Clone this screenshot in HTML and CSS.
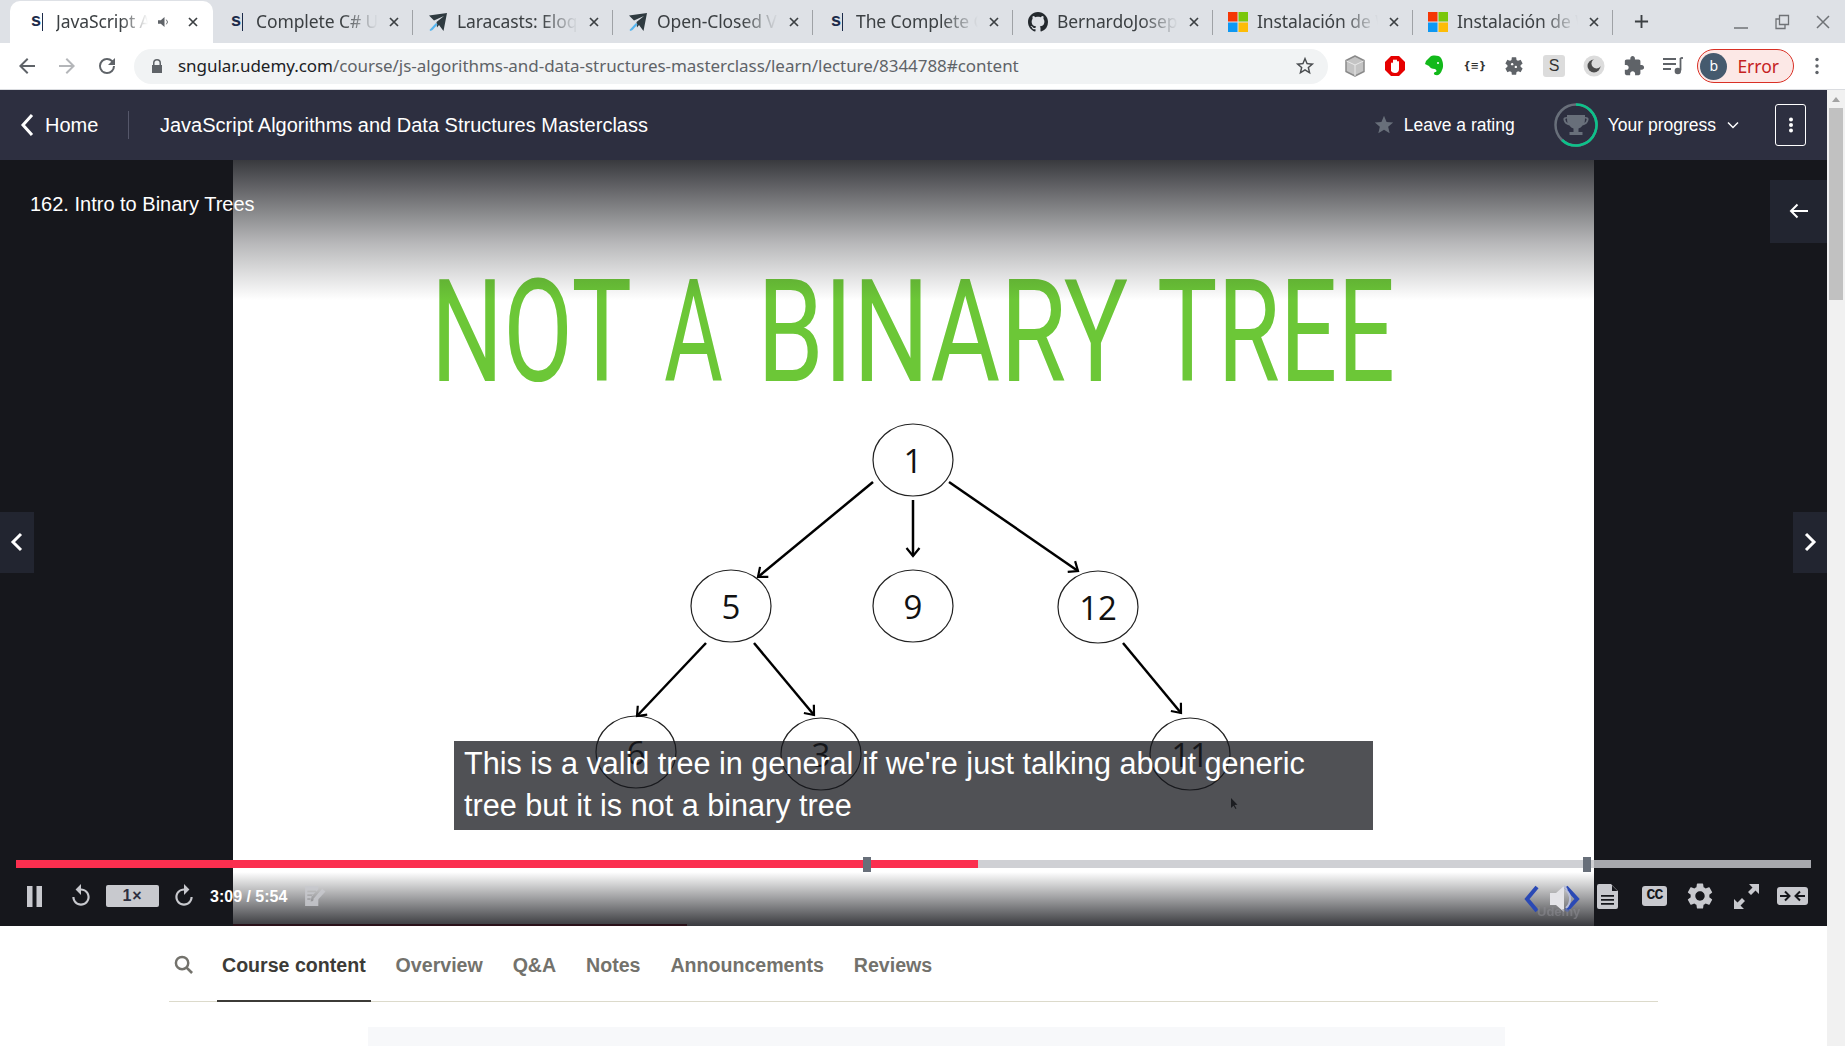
FILE: index.html
```html
<!DOCTYPE html>
<html lang="en">
<head>
<meta charset="utf-8">
<title>JavaScript Algorithms and Data Structures Masterclass</title>
<link rel="stylesheet" href="styles.css">
</head>
<body>
<svg class="defs" width="0" height="0" aria-hidden="true">
  <defs>
    <symbol id="plane" viewBox="0 0 20 20"><path fill="#2f3a40" d="M1 3.500 19 1l-3.500 18-4.500-6-2 2.500-.5-5.500L16 4 6 8.500z"/><path fill="#55b4ee" d="M1.500 18 8 11l1.500 1.500-5 5.500-2 1z"/></symbol>
    <symbol id="ms" viewBox="0 0 20 20"><rect width="9.500" height="9.500" fill="#f53605"/><rect x="10.500" width="9.500" height="9.500" fill="#7ac70c"/><rect y="10.500" width="9.500" height="9.500" fill="#0e98f2"/><rect x="10.500" y="10.500" width="9.500" height="9.500" fill="#fdbc07"/></symbol>
    <symbol id="github" viewBox="0 0 16 16"><path fill="#24292e" d="M8 0C3.580 0 0 3.580 0 8c0 3.540 2.290 6.530 5.470 7.590.4.070.55-.17.55-.38 0-.19-.01-.82-.01-1.490-2.010.37-2.530-.49-2.690-.94-.09-.23-.48-.94-.82-1.130-.28-.15-.68-.52-.01-.53.63-.01 1.080.58 1.230.82.72 1.210 1.870.87 2.330.66.070-.52.28-.87.51-1.070-1.780-.2-3.640-.89-3.640-3.950 0-.87.31-1.590.82-2.150-.08-.2-.36-1.020.08-2.120 0 0 .67-.21 2.200.82.64-.18 1.320-.27 2-.27.68 0 1.360.09 2 .27 1.530-1.040 2.200-.82 2.200-.82.44 1.100.16 1.920.08 2.120.51.56.82 1.270.82 2.150 0 3.070-1.870 3.750-3.650 3.950.29.25.54.73.54 1.480 0 1.070-.01 1.930-.01 2.200 0 .21.15.46.55.38A8.013 8.013 0 0016 8c0-4.420-3.580-8-8-8z"/></symbol>
    <symbol id="x" viewBox="0 0 12 12"><path d="M2 2l8 8M10 2l-8 8" fill="none" stroke="#3c4043" stroke-width="1.700"/></symbol>
    <symbol id="replay" viewBox="0 0 24 24"><path d="M12 5V1L7 6l5 5V7c3.310 0 6 2.690 6 6s-2.690 6-6 6-6-2.690-6-6H4c0 4.420 3.580 8 8 8s8-3.580 8-8-3.580-8-8-8z"/></symbol>
    <marker id="head" markerUnits="userSpaceOnUse" markerWidth="20" markerHeight="20" refX="10" refY="10" orient="auto">
      <path d="M2 3.500 10 10 2 16.500" fill="none" stroke="#000" stroke-width="2.200"/>
    </marker>
  </defs>
</svg>

<div class="tabstrip">
  <div class="tab tab-active">
    <span class="fav-s">s</span>
    <span class="tab-title">JavaScript Algorithms</span>
    <svg class="tab-audio" viewBox="0 0 14 12"><path fill="#5f6368" d="M0 4h3l4-3.500v11L3 8H0z"/><path fill="none" stroke="#5f6368" d="M9 3.500a3.500 3.500 0 010 5"/></svg>
    <svg class="tab-close"><use href="#x"/></svg>
  </div>
  <div class="tab"><span class="fav-s">s</span><span class="tab-title">Complete C# Unity</span><svg class="tab-close"><use href="#x"/></svg></div>
  <div class="tab"><svg class="fav"><use href="#plane"/></svg><span class="tab-title">Laracasts: Eloquent</span><svg class="tab-close"><use href="#x"/></svg></div>
  <div class="tab"><svg class="fav"><use href="#plane"/></svg><span class="tab-title">Open-Closed Violation</span><svg class="tab-close"><use href="#x"/></svg></div>
  <div class="tab"><span class="fav-s">s</span><span class="tab-title">The Complete Guide</span><svg class="tab-close"><use href="#x"/></svg></div>
  <div class="tab"><svg class="fav"><use href="#github"/></svg><span class="tab-title">BernardoJoseph</span><svg class="tab-close"><use href="#x"/></svg></div>
  <div class="tab"><svg class="fav"><use href="#ms"/></svg><span class="tab-title">Instalación de WSL</span><svg class="tab-close"><use href="#x"/></svg></div>
  <div class="tab"><svg class="fav"><use href="#ms"/></svg><span class="tab-title">Instalación de WSL</span><svg class="tab-close"><use href="#x"/></svg></div>
  <svg class="newtab" viewBox="0 0 16 16"><path d="M8 1v14M1 8h14" stroke="#3c4043" stroke-width="2"/></svg>
  <div class="winctl">
    <svg class="win-icon" viewBox="0 0 16 16"><path d="M1 14h14" stroke="#6f7276" stroke-width="1.500"/></svg>
    <svg class="win-icon" viewBox="0 0 16 16"><path d="M5.500 1.500h9v9h-9zM5.500 5H2v9.500h9V11" fill="none" stroke="#6f7276" stroke-width="1.300"/></svg>
    <svg class="win-icon" viewBox="0 0 16 16"><path d="M2 2l12 12M14 2L2 14" stroke="#6f7276" stroke-width="1.500"/></svg>
  </div>
</div>

<div class="toolbar">
  <svg class="nav-ico" viewBox="0 0 24 24"><path d="M20 11H7.800l5.600-5.600L12 4l-8 8 8 8 1.400-1.400L7.800 13H20z" fill="#5f6368"/></svg>
  <svg class="nav-ico" viewBox="0 0 24 24"><path d="M4 11h12.200l-5.600-5.600L12 4l8 8-8 8-1.400-1.400 5.600-5.600H4z" fill="#b4b6b9"/></svg>
  <svg class="nav-ico" viewBox="0 0 24 24"><path d="M17.650 6.350A7.960 7.960 0 0012 4a8 8 0 108 8h-2a6 6 0 11-1.780-4.220L13 11h7V4z" fill="#5f6368"/></svg>
  <div class="omnibox">
    <svg class="lock" viewBox="0 0 12 14"><path fill="#5f6368" d="M2 6V4a4 4 0 018 0v2h1v8H1V6zm1.500 0h5V4a2.500 2.500 0 00-5 0z"/></svg>
    <span class="url"><span class="url-host">sngular.udemy.com</span>/course/js-algorithms-and-data-structures-masterclass/learn/lecture/8344788#content</span>
    <svg class="bookmark" viewBox="0 0 24 24"><path fill="#4a4d50" d="M22 9.240l-7.190-.62L12 2 9.190 8.630 2 9.240l5.460 4.730L5.820 21 12 17.270 18.180 21l-1.630-7.030L22 9.240zM12 15.400l-3.760 2.270 1-4.280-3.320-2.880 4.380-.38L12 6.100l1.710 4.040 4.380.38-3.320 2.880 1 4.280L12 15.400z"/></svg>
  </div>
  <div class="exts">
    <svg class="ext" viewBox="0 0 22 22"><path d="M11 1l9 4.500v11L11 21l-9-4.500v-11z" fill="#c4c4c4" stroke="#8a8a8a" stroke-width="1.500" stroke-linejoin="round"/><path d="M2.500 6L11 10l8.500-4M11 10v11" fill="none" stroke="#e9e9e9"/></svg>
    <svg class="ext" viewBox="0 0 22 22"><path d="M7 1h8l6 6v8l-6 6H7l-6-6V7z" fill="#e60000"/><path d="M7 16V8.500a1 1 0 012 0V11V5.500a1 1 0 012 0V11V5.500a1 1 0 012 0V11V7a1 1 0 012 0v7c0 2-1 4-4 4-2 0-3-1-4-2z" fill="#fff"/></svg>
    <svg class="ext" viewBox="0 0 22 22"><path d="M6 2c2-2 9-2 11 1 2 3 3 9 1 12-1 3-3 6-6 5-2 0-3-2-1-3 2 0 2-2 0-3-3 0-5-1-6-3L1 9l1-3z" fill="#12b91a"/><circle cx="14" cy="8" r="1" fill="#fff"/></svg>
    <span class="ext ext-json">{≡}</span>
    <svg class="ext" viewBox="0 0 24 24"><path fill="#5f6368" d="M19.140 12.940c.04-.3.06-.61.06-.94 0-.32-.02-.64-.07-.94l2.030-1.580a.49.49 0 00.12-.61l-1.920-3.320a.488.488 0 00-.59-.22l-2.390.96c-.5-.38-1.030-.7-1.620-.94l-.36-2.540a.484.484 0 00-.48-.41h-3.840c-.24 0-.43.17-.47.41l-.36 2.540c-.59.24-1.130.57-1.620.94l-2.390-.96c-.22-.08-.47 0-.59.22L2.740 8.870c-.12.21-.08.47.12.61l2.030 1.580c-.05.3-.09.63-.09.94s.02.64.07.94l-2.030 1.580a.49.49 0 00-.12.61l1.920 3.320c.12.22.37.29.59.22l2.390-.96c.5.38 1.030.7 1.620.94l.36 2.540c.05.24.24.41.48.41h3.840c.24 0 .44-.17.47-.41l.36-2.540c.59-.24 1.130-.56 1.620-.94l2.390.96c.22.08.47 0 .59-.22l1.920-3.320c.12-.22.07-.47-.12-.61l-2.010-1.580z"/><circle cx="10" cy="10" r="1.300" fill="#fff"/><circle cx="14" cy="13" r="1.300" fill="#fff"/></svg>
    <span class="ext ext-s">S</span>
    <svg class="ext" viewBox="0 0 22 22"><circle cx="11" cy="11" r="10.500" fill="#dcdcdc"/><circle cx="11" cy="11" r="6.500" fill="#4b4b4b"/><circle cx="13.500" cy="8.500" r="5" fill="#dcdcdc"/></svg>
    <svg class="ext" viewBox="0 0 24 24"><path fill="#5f6368" d="M20.500 11H19V7c0-1.100-.9-2-2-2h-4V3.500C13 2.120 11.880 1 10.500 1S8 2.120 8 3.500V5H4c-1.100 0-1.990.9-1.990 2v3.800H3.500c1.490 0 2.700 1.210 2.700 2.700s-1.210 2.700-2.700 2.700H2V20c0 1.100.9 2 2 2h3.800v-1.500c0-1.490 1.210-2.700 2.700-2.700 1.490 0 2.700 1.210 2.700 2.700V22H17c1.100 0 2-.9 2-2v-4h1.500c1.380 0 2.500-1.120 2.500-2.500S21.880 11 20.500 11z"/></svg>
    <svg class="ext" viewBox="0 0 22 22"><path d="M1 4h13M1 9h13M1 14h8" stroke="#5f6368" stroke-width="1.800"/><path d="M18.500 3v12.500" stroke="#5f6368" stroke-width="1.800"/><path d="M18.500 3H21" stroke="#5f6368" stroke-width="1.800"/><circle cx="15.800" cy="16" r="3.200" fill="#5f6368"/></svg>
  </div>
  <div class="profile"><span class="avatar">b</span><span class="profile-label">Error</span></div>
  <svg class="kebab" viewBox="0 0 4 18"><circle cx="2" cy="2.500" r="1.700" fill="#5f6368"/><circle cx="2" cy="9" r="1.700" fill="#5f6368"/><circle cx="2" cy="15.500" r="1.700" fill="#5f6368"/></svg>
</div>

<div class="viewport">
  <main class="page">
    <header class="course-header">
      <a class="home"><svg class="home-chevron" viewBox="0 0 14 24"><path d="M12 2 3 12l9 10" fill="none" stroke="#fff" stroke-width="3"/></svg>Home</a>
      <span class="course-title">JavaScript Algorithms and Data Structures Masterclass</span>
      <div class="header-actions">
        <a class="rating"><svg class="rating-star" viewBox="0 0 24 24"><path fill="#686f7a" d="M12 17.270L18.180 21l-1.640-7.030L22 9.240l-7.190-.61L12 2 9.190 8.630 2 9.240l5.460 4.730L5.820 21z"/></svg>Leave a rating</a>
        <a class="progress">
          <svg class="ring" viewBox="0 0 44 44">
            <circle cx="22" cy="22" r="20.500" fill="none" stroke="#686f7a" stroke-width="2.500"/>
            <path d="M22 1.500A20.500 20.500 0 1 1 8 37" fill="none" stroke="#0cc28a" stroke-width="2.500"/>
            <path fill="#686f7a" d="M13 12h18v2c3 0 4 1 3.500 3-.5 3-3 5-6 5.500-1 1.500-2.500 2.500-4 3V29h4v3H15.500v-3h4v-3.500c-1.500-.5-3-1.500-4-3-3-.5-5.500-2.500-6-5.500-.5-2 .5-3 3.500-3zm0 3.500c-1.500 0-2 .5-1.500 1.500.3 1.300 1 2.300 2 3-.3-1.500-.5-3-.5-4.500zm18 0c0 1.500-.2 3-.5 4.500 1-.7 1.700-1.700 2-3 .5-1 0-1.500-1.500-1.500z"/>
          </svg>
          Your progress
          <svg class="progress-chevron" viewBox="0 0 12 8"><path d="M1 1.500l5 5 5-5" fill="none" stroke="#fff" stroke-width="1.500"/></svg>
        </a>
        <button class="more-btn" type="button"><svg viewBox="0 0 6 16" class="more-ico"><circle cx="3" cy="2.500" r="2" fill="#fff"/><circle cx="3" cy="8" r="2" fill="#fff"/><circle cx="3" cy="13.500" r="2" fill="#fff"/></svg></button>
      </div>
    </header>

    <section class="video">
      <div class="slide">
        <svg class="slide-art" viewBox="233 160 1361 766">
          <text class="slide-heading" y="381"><tspan x="431" textLength="199" lengthAdjust="spacingAndGlyphs">NOT</tspan> <tspan x="664" textLength="59" lengthAdjust="spacingAndGlyphs">A</tspan> <tspan x="757" textLength="371" lengthAdjust="spacingAndGlyphs">BINARY</tspan> <tspan x="1157" textLength="238" lengthAdjust="spacingAndGlyphs">TREE</tspan></text>
          <g class="nodes">
            <ellipse cx="913" cy="460" rx="40" ry="36"/>
            <ellipse cx="731" cy="606" rx="40" ry="36"/>
            <ellipse cx="913" cy="606" rx="40" ry="36"/>
            <ellipse cx="1098" cy="607" rx="40" ry="36"/>
            <ellipse cx="636" cy="752" rx="40" ry="36"/>
            <ellipse cx="821" cy="754" rx="40" ry="36"/>
            <ellipse cx="1190" cy="754" rx="40" ry="36"/>
          </g>
          <g class="edges">
            <line x1="873" y1="482" x2="758" y2="577" marker-end="url(#head)"/>
            <line x1="913" y1="500" x2="913" y2="556" marker-end="url(#head)"/>
            <line x1="949" y1="482" x2="1078" y2="571" marker-end="url(#head)"/>
            <line x1="706" y1="643" x2="637" y2="716" marker-end="url(#head)"/>
            <line x1="754" y1="643" x2="814" y2="715" marker-end="url(#head)"/>
            <line x1="1123" y1="643" x2="1181" y2="713" marker-end="url(#head)"/>
          </g>
          <g class="labels">
            <text x="913" y="473">1</text>
            <text x="731" y="619">5</text>
            <text x="913" y="619">9</text>
            <text x="1098" y="620">12</text>
            <text x="636" y="765">6</text>
            <text x="821" y="767">3</text>
            <text x="1190" y="767">11</text>
          </g>
          <path class="cursor" d="M1231 798v10l2.500-2.300 2 3.300 1-.6-2-3.300 3-.4z"/>
        </svg>
      </div>

      <div class="shade-top"></div>
      <div class="shade-bottom"></div>
      <div class="buffer-line"></div>

      <svg class="player-mark" viewBox="1520 880 70 46">
        <path class="slide-chev" d="M1537 887 1527 899 1537 911"/>
        <path class="slide-chev" d="M1566 887 1577 899 1566 911"/>
        <path class="slide-speaker" d="M1550 893h6l8-7v26l-8-7h-6z"/>
        <path class="slide-waves" d="M1566 890a12 12 0 010 18M1564 886a17 17 0 013 4"/>
        <text class="slide-mark" x="1537" y="916">Udemy</text>
      </svg>

      <div class="lecture-title">162. Intro to Binary Trees</div>
      <button class="drawer-btn" type="button"><svg viewBox="0 0 20 16" class="drawer-ico"><path d="M19 8H2M8.500 1.500 2 8l6.500 6.500" fill="none" stroke="#fff" stroke-width="2"/></svg></button>
      <button class="step-btn step-prev" type="button"><svg viewBox="0 0 14 20" class="step-ico"><path d="M11 2 3 10l8 8" fill="none" stroke="#fff" stroke-width="3"/></svg></button>
      <button class="step-btn step-next" type="button"><svg viewBox="0 0 14 20" class="step-ico"><path d="M3 2l8 8-8 8" fill="none" stroke="#fff" stroke-width="3"/></svg></button>

      <div class="caption">This is a valid tree in general if we're just talking about generic tree but it is not a binary tree</div>

      <div class="scrub">
        <div class="scrub-played"></div>
        <span class="scrub-handle scrub-handle-a"></span>
        <span class="scrub-handle scrub-handle-b"></span>
      </div>

      <div class="controls">
        <div class="controls-group">
          <svg class="ctl-pause" viewBox="0 0 15 21"><rect width="5.500" height="21"/><rect x="9.500" width="5.500" height="21"/></svg>
          <svg class="ctl-replay"><use href="#replay"/></svg>
          <span class="ctl-speed">1×</span>
          <svg class="ctl-replay ctl-forward"><use href="#replay"/></svg>
          <span class="ctl-time">3:09 / 5:54</span>
          <svg class="ctl-note" viewBox="0 0 20 20"><path d="M1 1h12v3L7 10l-1 5 5-1 2-2v7H1zM3 5v1.500h8V5zm0 3.500V10h5V8.500zm0 3.500v1.500h3V12z"/><path d="M16.500 3.500l3 2.500-8 8.500-3.500 1 1-3.500z"/></svg>
        </div>
        <div class="controls-group">
          <svg class="ctl-doc" viewBox="0 0 21 25"><path d="M2 0h12l7 7v16a2 2 0 01-2 2H2a2 2 0 01-2-2V2a2 2 0 012-2zm13 1.500V7h5.500zM4 11v1.800h13V11zm0 4v1.800h13V15zm0 4v1.800h13V19z" fill-rule="evenodd"/></svg>
          <span class="ctl-cc">CC</span>
          <svg class="ctl-gear" viewBox="2 2 20 20"><path d="M19.140 12.940c.04-.3.06-.61.06-.94 0-.32-.02-.64-.07-.94l2.030-1.580a.49.49 0 00.12-.61l-1.920-3.320a.488.488 0 00-.59-.22l-2.390.96c-.5-.38-1.030-.7-1.620-.94l-.36-2.540a.484.484 0 00-.48-.41h-3.840c-.24 0-.43.17-.47.41l-.36 2.540c-.59.24-1.130.57-1.620.94l-2.390-.96c-.22-.08-.47 0-.59.22L2.740 8.870c-.12.21-.08.47.12.61l2.030 1.580c-.05.3-.09.63-.09.94s.02.64.07.94l-2.030 1.580a.49.49 0 00-.12.61l1.920 3.320c.12.22.37.29.59.22l2.390-.96c.5.38 1.030.7 1.620.94l.36 2.540c.05.24.24.41.48.41h3.840c.24 0 .44-.17.47-.41l.36-2.540c.59-.24 1.130-.56 1.620-.94l2.390.96c.22.08.47 0 .59-.22l1.920-3.320c.12-.22.07-.47-.12-.61l-2.010-1.580zM12 15.600c-1.980 0-3.600-1.620-3.600-3.600s1.620-3.600 3.600-3.600 3.600 1.620 3.600 3.600-1.620 3.600-3.600 3.600z"/></svg>
          <svg class="ctl-expand" viewBox="0 0 25 25"><path d="M15 0h10v10l-3.500-3.500-4.500 4.500-3-3 4.500-4.500zM10 25H0V15l3.500 3.500L8 14l3 3-4.500 4.500z"/></svg>
          <svg class="ctl-theatre" viewBox="0 0 31 18"><rect width="31" height="18" rx="3"/><path d="M3 9h9M8 4.500 12.500 9 8 13.500M28 9h-9M23 4.500 18.500 9l4.500 4.500" fill="none" stroke="#16171c" stroke-width="2"/></svg>
        </div>
      </div>
    </section>

    <nav class="course-nav">
      <svg class="nav-search" viewBox="0 0 20 20"><circle cx="8.500" cy="8.500" r="6.500" fill="none" stroke="#73726c" stroke-width="2.600"/><path d="M13 13l6 6" stroke="#73726c" stroke-width="2.800"/></svg>
      <a class="nav-item nav-item-active">Course content</a>
      <a class="nav-item">Overview</a>
      <a class="nav-item">Q&amp;A</a>
      <a class="nav-item">Notes</a>
      <a class="nav-item">Announcements</a>
      <a class="nav-item">Reviews</a>
    </nav>
    <div class="panel"></div>
  </main>
  <aside class="scrollbar">
    <span class="scroll-up"></span>
    <span class="scroll-thumb"></span>
  </aside>
</div>
</body>
</html>
```

FILE: styles.css
```css
* { box-sizing: border-box; }
html, body { margin: 0; height: 100%; overflow: hidden; }
body { font-family: "Liberation Sans", Arial, sans-serif; background: #fff; width: 1845px; height: 1046px; }
a { color: inherit; text-decoration: none; }
button { border: 0; padding: 0; font: inherit; }
.defs { position: absolute; }

/* Browser tabs */
.tabstrip { height: 43px; background: #dee1e6; display: flex; align-items: stretch; padding-left: 13px; font-family: "Noto Sans", sans-serif; }
.tab { width: 200px; flex: none; display: flex; align-items: center; padding: 0 13px 0 18px; position: relative; margin-top: 1px; }
.tab::after { content: ""; position: absolute; right: 0; top: 9px; height: 25px; width: 1px; background: #9fa2a6; }
.tab-active { width: 203px; margin-left: -3px; padding: 0 14px 0 21px; background: #fff; border-radius: 10px 10px 0 0; }
.tab-active::after, .tab:nth-child(1)::after { display: none; }
.fav-s { width: 12px; height: 18px; flex: none; margin-right: 13px; font: 700 18px/15px "Liberation Sans", sans-serif; color: #1c2b4a; border-right: 1px solid #1c2b4a; }
.fav { width: 20px; height: 20px; flex: none; margin-right: 9px; margin-left: -3px; }
.tab-title { flex: 1; min-width: 0; margin-right: 10px; margin-top: -2px; overflow: hidden; white-space: nowrap; font-size: 17.500px; letter-spacing: -.1px; color: #3c4043; -webkit-mask-image: linear-gradient(90deg, #000 70%, transparent 100%); mask-image: linear-gradient(90deg, #000 70%, transparent 100%); }
.tab-audio { width: 13px; height: 12px; margin-right: 16px; flex: none; }
.tab-close { width: 12px; height: 12px; flex: none; }
.newtab { width: 15px; height: 15px; margin: 14px 0 0 21px; flex: none; }
.winctl { margin-left: auto; padding-right: 14px; display: flex; gap: 25px; align-items: center; }
.win-icon { width: 16px; height: 16px; }

/* Browser toolbar */
.toolbar { height: 47px; display: flex; align-items: center; border-bottom: 1px solid #dadce0; background: #fff; font-family: "Noto Sans", sans-serif; padding-left: 15px; }
.nav-ico { width: 24px; height: 24px; margin-right: 16px; flex: none; }
.omnibox { margin-left: -1px; width: 1194px; height: 35px; border-radius: 18px; background: #f1f3f4; display: flex; align-items: center; padding-left: 17px; flex: none; }
.lock { width: 12px; height: 14px; flex: none; }
.url { margin-left: 15px; margin-top: -2px; font-size: 17px; letter-spacing: -.05px; color: #5f6368; white-space: nowrap; }
.url-host { color: #202124; }
.bookmark { width: 22px; height: 22px; margin-left: auto; margin-right: 12px; flex: none; }
.exts { display: flex; align-items: center; margin-left: 16px; gap: 17.800px; }
.ext { width: 22px; height: 22px; flex: none; }
.ext-json { font: 700 10px/22px "DejaVu Sans", sans-serif; color: #333; text-align: center; white-space: nowrap; }
.ext-s { font: 400 16px/22px "Liberation Sans", sans-serif; text-align: center; color: #333; background: #dcdcdc; border-radius: 3px; }
.profile { width: 97px; height: 34px; margin-left: 13px; border: 1px solid #d93025; border-radius: 17px; background: #fce8e6; display: flex; align-items: center; padding-left: 2px; flex: none; }
.avatar { width: 27px; height: 27px; border-radius: 50%; background: #455a6e; color: #fff; font-size: 14px; line-height: 26px; text-align: center; }
.profile-label { margin-left: 10px; color: #c5221f; font-size: 17.500px; }
.kebab { width: 4px; height: 18px; margin-left: 21px; flex: none; }

/* Page */
.viewport { height: 956px; display: flex; }
.page { width: 1827px; flex: none; overflow: hidden; }
.scrollbar { width: 18px; flex: none; background: #f1f1f1; position: relative; }
.scroll-up { position: absolute; left: 5px; top: 7px; border: 4px solid transparent; border-top: 0; border-bottom: 5px solid #a3a3a3; }
.scroll-thumb { position: absolute; left: 2px; right: 2px; top: 18px; height: 192px; background: #c1c1c1; }

.course-header { height: 70px; background: #2d2f40; color: #fff; display: flex; align-items: center; padding-left: 20px; }
.home { display: flex; align-items: center; width: 109px; height: 28px; border-right: 1px solid #55576a; font-size: 20px; }
.home-chevron { width: 14px; height: 24px; margin-right: 11px; }
.course-title { margin-left: 31px; font-size: 20px; }
.header-actions { margin-left: auto; display: flex; align-items: center; font-size: 17.500px; padding-right: 21px; }
.rating { display: flex; align-items: center; }
.rating-star { width: 22px; height: 22px; margin-right: 9px; }
.progress { display: flex; align-items: center; margin-left: 39px; }
.ring { width: 44px; height: 44px; margin-right: 10px; }
.progress-chevron { width: 12px; height: 8px; margin-left: 11px; }
.more-btn { width: 31px; height: 42px; margin-left: 36px; background: transparent; border: 1px solid #fff; border-radius: 3px; display: flex; align-items: center; justify-content: center; }
.more-ico { width: 6px; height: 16px; }

/* Video */
.video { height: 766px; background: #16171c; position: relative; padding-left: 233px; overflow: hidden; }
.slide { width: 1361px; height: 766px; background: #fff; }
.slide-art { display: block; width: 1361px; height: 766px; }
.slide-heading { font-family: Roboto, "Liberation Sans", sans-serif; font-weight: 400; font-size: 142px; fill: #6cc737; }
.nodes ellipse { fill: #fff; stroke: #222; stroke-width: 1.200; }
.edges line { stroke: #000; stroke-width: 2.500; }
.labels text { font-family: "Open Sans", sans-serif; font-size: 33px; fill: #111; text-anchor: middle; }
.cursor { fill: #333; }
.player-mark { position: absolute; left: 1520px; top: 720px; width: 70px; height: 46px; }
.slide-chev { fill: none; stroke: #2a49b5; stroke-width: 4; }
.slide-speaker { fill: #e4e4e8; }
.slide-waves { fill: none; stroke: #b8bed8; stroke-width: 2; }
.slide-mark { font-family: "Liberation Sans", sans-serif; font-weight: 700; font-size: 13px; fill: #8a8a90; opacity: .6; }

.shade-top { position: absolute; left: 0; right: 0; top: 0; height: 140px; background: linear-gradient(rgba(22, 23, 28, .85), rgba(22, 23, 28, .3) 60%, rgba(22, 23, 28, 0)); }
.shade-bottom { position: absolute; left: 0; right: 0; bottom: 0; height: 54px; background: linear-gradient(rgba(22, 23, 28, 0), rgba(22, 23, 28, .85)); }
.buffer-line { position: absolute; left: 233px; bottom: 0; width: 454px; height: 2px; background: #2a1119; }

.lecture-title { position: absolute; left: 30px; top: 33px; color: #fff; font-size: 20px; line-height: 22px; }
.drawer-btn { position: absolute; right: 0; top: 20px; width: 57px; height: 63px; background: #222530; display: flex; align-items: center; justify-content: center; }
.drawer-ico { width: 20px; height: 16px; margin-top: -2px; }
.step-btn { position: absolute; top: 352px; width: 34px; height: 61px; background: #222530; display: flex; align-items: center; justify-content: center; }
.step-prev { left: 0; }
.step-next { right: 0; }
.step-ico { width: 14px; height: 20px; margin-top: -2px; }

.caption { position: absolute; left: 454px; top: 581px; width: 919px; height: 89px; padding: 1px 10px 0; background: rgba(22, 23, 28, .75); color: #fff; font-size: 30.600px; line-height: 42px; }

.scrub { position: absolute; left: 16px; right: 16px; top: 700px; height: 8px; background: rgba(197, 198, 203, .83); }
.scrub-played { width: 962px; height: 8px; background: #fb2f4f; }
.scrub-handle { position: absolute; top: -3px; width: 8px; height: 15px; background: #686f7a; }
.scrub-handle-a { left: 847px; }
.scrub-handle-b { left: 1567px; }

.controls { position: absolute; left: 0; right: 0; top: 716px; height: 40px; padding: 0 19px 0 27px; display: flex; align-items: center; justify-content: space-between; }
.controls-group { display: flex; align-items: center; }
.controls svg { fill: #c8c9ce; flex: none; }
.ctl-pause { width: 15px; height: 21px; }
.ctl-replay { width: 26px; height: 26px; margin-left: 26px; }
.ctl-forward { margin-left: 12px; transform: scaleX(-1); }
.ctl-speed { width: 53px; height: 22px; margin-left: 12px; border-radius: 2px; background: #c8c9ce; color: #2d2f40; font-size: 16px; font-weight: 700; line-height: 22px; text-align: center; letter-spacing: 1px; }
.ctl-time { margin-left: 13px; margin-top: 2px; color: #fff; font-size: 16px; font-weight: 700; white-space: nowrap; }
.ctl-note { width: 22px; height: 22px; margin-left: 17px; opacity: .85; }
.ctl-doc { width: 21px; height: 25px; }
.ctl-cc { width: 25px; height: 20px; margin-left: 24px; border-radius: 3px; background: #c8c9ce; color: #16171c; font: 700 15px/20px "Liberation Mono", monospace; letter-spacing: -1px; text-align: center; }
.ctl-gear { width: 26px; height: 26px; margin-left: 20px; }
.ctl-expand { width: 25px; height: 25px; margin-left: 21px; }
.ctl-theatre { width: 31px; height: 18px; margin-left: 18px; }

/* Course nav */
.course-nav { height: 76px; margin-left: 169px; width: 1489px; display: flex; align-items: stretch; border-bottom: 1px solid #dcdacb; }
.nav-search { width: 19px; height: 19px; margin: 29px 24px 0 5px; flex: none; }
.nav-item { display: flex; align-items: center; padding: 4px 5px 0; margin-right: 19.900px; margin-bottom: -1px; color: #73726c; font-size: 19.600px; font-weight: 700; border-bottom: 2px solid transparent; }
.nav-item-active { color: #3c3b37; border-bottom-color: #3c3b37; }
.panel { margin: 25px 0 0 368px; width: 1137px; height: 60px; background: #f7f8fa; }
```
